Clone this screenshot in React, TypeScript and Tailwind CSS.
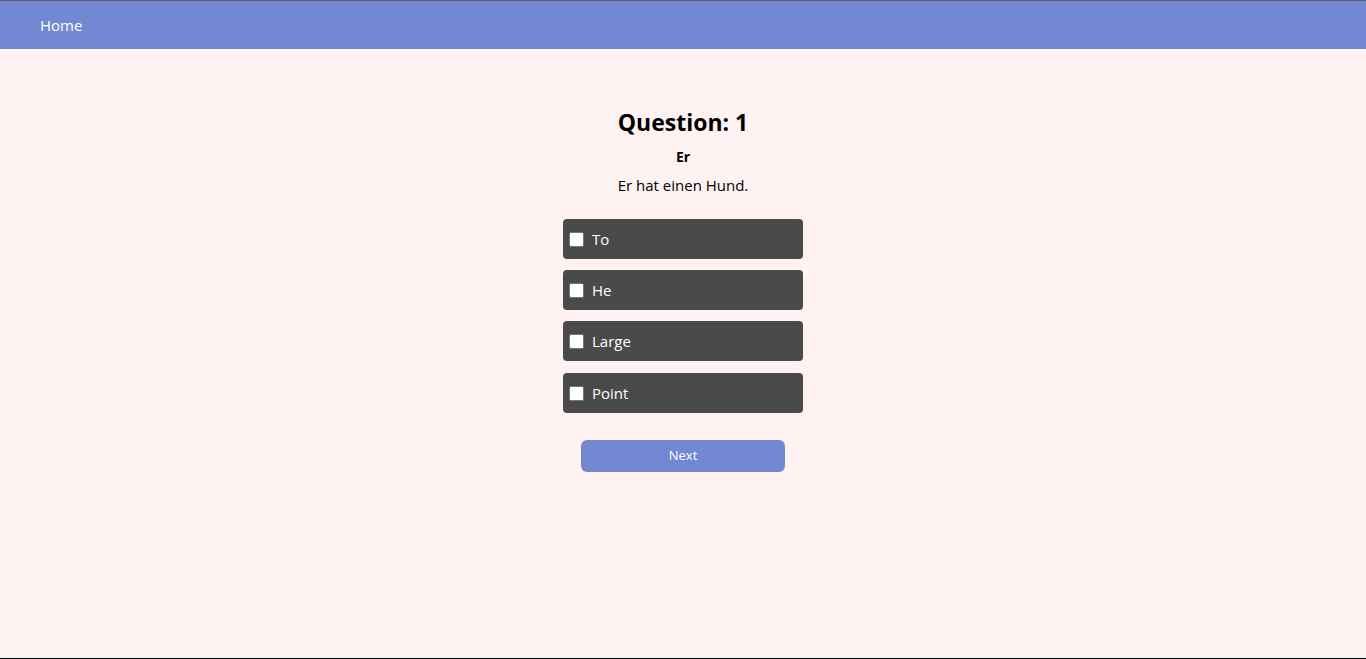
import { useState } from "react";

const OPTIONS = ["To", "He", "Large", "Point"];

export default function App() {
  const [checked, setChecked] = useState<string[]>([]);

  const toggle = (opt: string) =>
    setChecked((prev) => (prev.includes(opt) ? prev.filter((o) => o !== opt) : [...prev, opt]));

  return (
    <div
      className="flex h-[659px] flex-col overflow-hidden border-t border-b border-t-[#5a5a5a] border-b-black bg-[#fff2f2]"
      style={{ fontFamily: '"Open Sans", "Noto Sans", sans-serif' }}
    >
      <header className="flex h-[48px] shrink-0 items-center bg-[#7388d3] px-10">
        <a href="#" className="text-[15px] text-white">
          Home
        </a>
      </header>

      <main className="flex flex-col items-center pt-[58px]">
        <h1 className="text-[23px] font-bold leading-[30px] text-black">Question: 1</h1>
        <p className="mt-[10px] text-[14px] font-bold leading-5 text-black">Er</p>
        <p className="mt-[8px] text-[15px] leading-5 text-black">Er hat einen Hund.</p>

        <div className="mt-[24px] flex w-[240px] flex-col gap-[11px]">
          {OPTIONS.map((opt) => (
            <label
              key={opt}
              className="flex h-10 cursor-pointer items-center gap-[8px] rounded-[4px] bg-[#4a4a4a] px-[6px] text-[15px] text-white last:mt-px"
            >
              <input
                type="checkbox"
                checked={checked.includes(opt)}
                onChange={() => toggle(opt)}
                className="h-[15px] w-[15px] appearance-none rounded-[2px] border border-[#767676] bg-white checked:bg-[#7388d3]"
              />
              <span>{opt}</span>
            </label>
          ))}
        </div>

        <button
          type="button"
          className="mt-[27px] h-8 w-[204px] rounded-[6px] bg-[#7388d3] text-[13px] text-white"
        >
          Next
        </button>
      </main>
    </div>
  );
}
